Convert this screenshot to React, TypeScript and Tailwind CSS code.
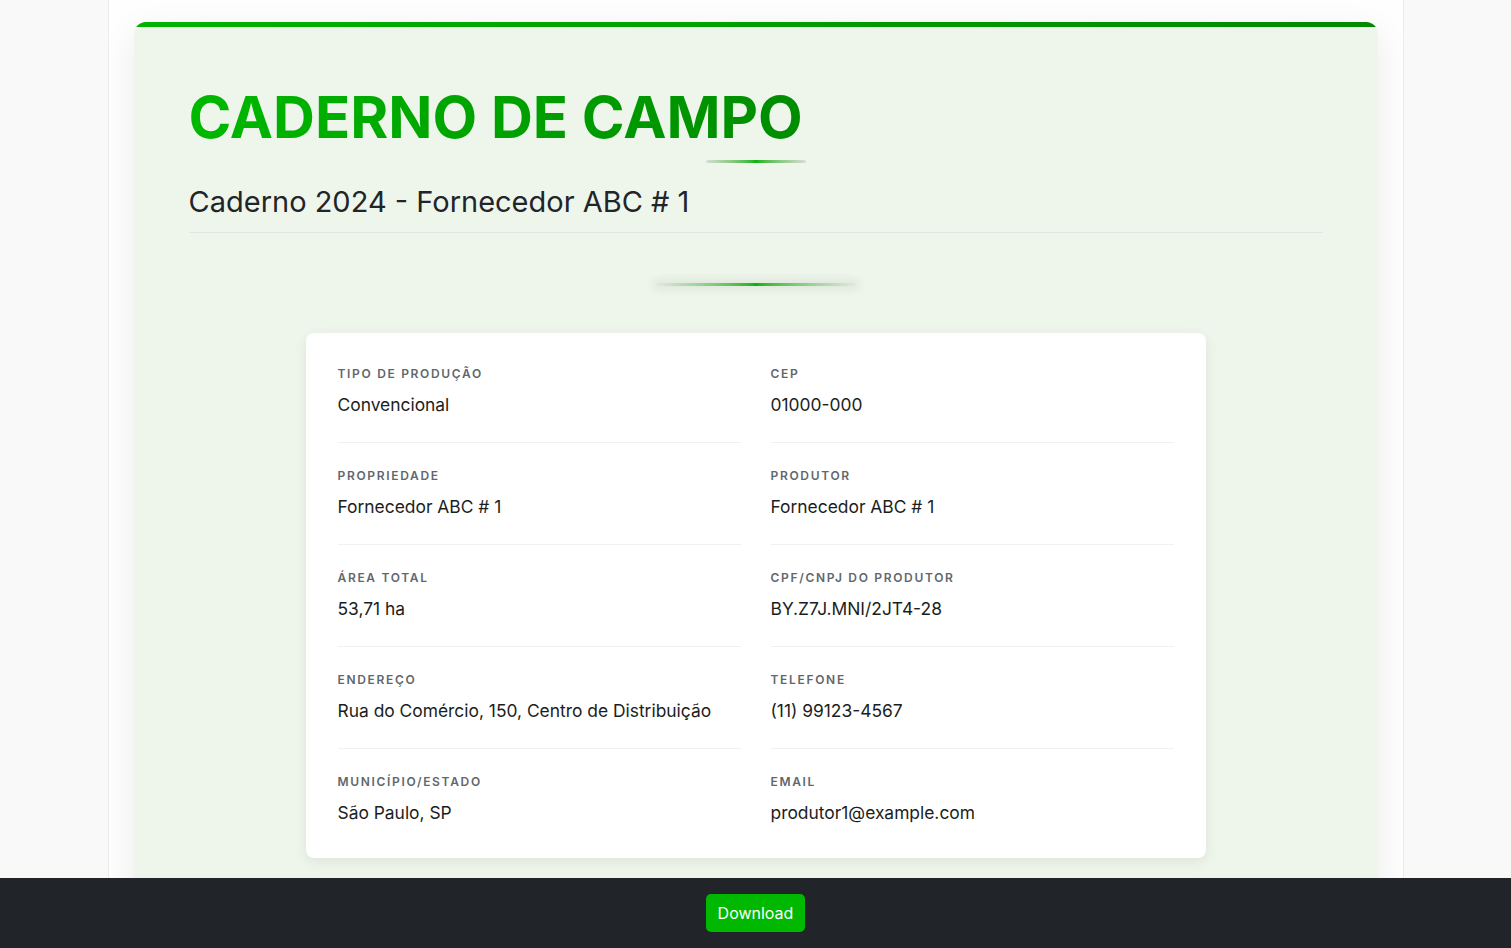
import React from 'react';

type Field = { label: string; value: string };

const rows: [Field, Field][] = [
  [
    { label: 'Tipo de Produção', value: 'Convencional' },
    { label: 'CEP', value: '01000-000' },
  ],
  [
    { label: 'Propriedade', value: 'Fornecedor ABC # 1' },
    { label: 'Produtor', value: 'Fornecedor ABC # 1' },
  ],
  [
    { label: 'Área Total', value: '53,71 ha' },
    { label: 'CPF/CNPJ do Produtor', value: 'BY.Z7J.MNI/2JT4-28' },
  ],
  [
    { label: 'Endereço', value: 'Rua do Comércio, 150, Centro de Distribuição' },
    { label: 'Telefone', value: '(11) 99123-4567' },
  ],
  [
    { label: 'Município/Estado', value: 'São Paulo, SP' },
    { label: 'Email', value: 'produtor1@example.com' },
  ],
];

const InfoItem: React.FC<{ field: Field; last: boolean; first: boolean }> = ({ field, last, first }) => (
  <div
    className={`flex flex-col gap-[11px] ${first ? '' : 'pt-[25px]'} ${
      last ? '' : 'pb-[25px] border-b border-[#eef1ef]'
    }`}
  >
    <span className="text-[12px] leading-[16px] font-semibold uppercase tracking-[0.14em] text-[#5f676d]">
      {field.label}
    </span>
    <span className="text-[17.4px] leading-[24px] text-[#1b1e21]">{field.value}</span>
  </div>
);

export default function App() {
  return (
    <div
      className="min-h-screen bg-[#f8f9f8] text-[#212529]"
      style={{ fontFamily: 'Inter, "Noto Sans", "Liberation Sans", sans-serif' }}
    >
      <div className="mx-auto w-[1296px] min-h-screen bg-[#fdfefd] border-x border-[#eceeec] px-[25px] pt-[22px]">
        <div className="rounded-t-[12px] overflow-hidden bg-[#eef6ec] shadow-[0_10px_35px_rgba(0,0,0,0.08)] pb-[120px]">
          <div className="h-[5px] bg-gradient-to-r from-[#00b300] to-[#008a00]" />

          <div className="px-[55px] pt-[55px]">
            <h1 className="text-[58px] leading-[70px] font-bold tracking-normal bg-gradient-to-r from-[#00b800] to-[#008c00] bg-clip-text text-transparent w-fit">
              CADERNO DE CAMPO
            </h1>
            <div className="flex justify-center mt-[8px]">
              <div className="w-[100px] h-[3px] bg-gradient-to-r from-[#d7ddd6] via-[#00b300] to-[#d7ddd6] rounded-full" />
            </div>
            <h2 className="mt-[21px] text-[29px] leading-[35px] font-normal text-[#212529] pb-[13px] border-b border-[#e2e7e1]">
              Caderno 2024 - Fornecedor ABC # 1
            </h2>
          </div>

          <div className="flex justify-center mt-[50px]">
            <div className="w-[200px] h-[3px] rounded-full bg-gradient-to-r from-[#e3e7e2] via-[#00b300] to-[#e3e7e2] shadow-[0_0_8px_4px_rgba(0,0,0,0.06)]" />
          </div>

          <div className="flex justify-center mt-[47px]">
            <div className="w-[900px] bg-white rounded-[8px] shadow-[0_4px_14px_rgba(0,0,0,0.07)] px-[32px] py-[33px] grid grid-cols-2 gap-x-[30px]">
              {rows.map((row, i) => (
                <React.Fragment key={i}>
                  <InfoItem field={row[0]} first={i === 0} last={i === rows.length - 1} />
                  <InfoItem field={row[1]} first={i === 0} last={i === rows.length - 1} />
                </React.Fragment>
              ))}
            </div>
          </div>
        </div>
      </div>

      <div className="fixed bottom-0 left-0 right-0 h-[70px] bg-[#212529] flex items-center justify-center">
        <button className="h-[38px] px-[12px] rounded-[5px] bg-[#00b800] text-white text-[16px] leading-[24px]">
          Download
        </button>
      </div>
    </div>
  );
}
